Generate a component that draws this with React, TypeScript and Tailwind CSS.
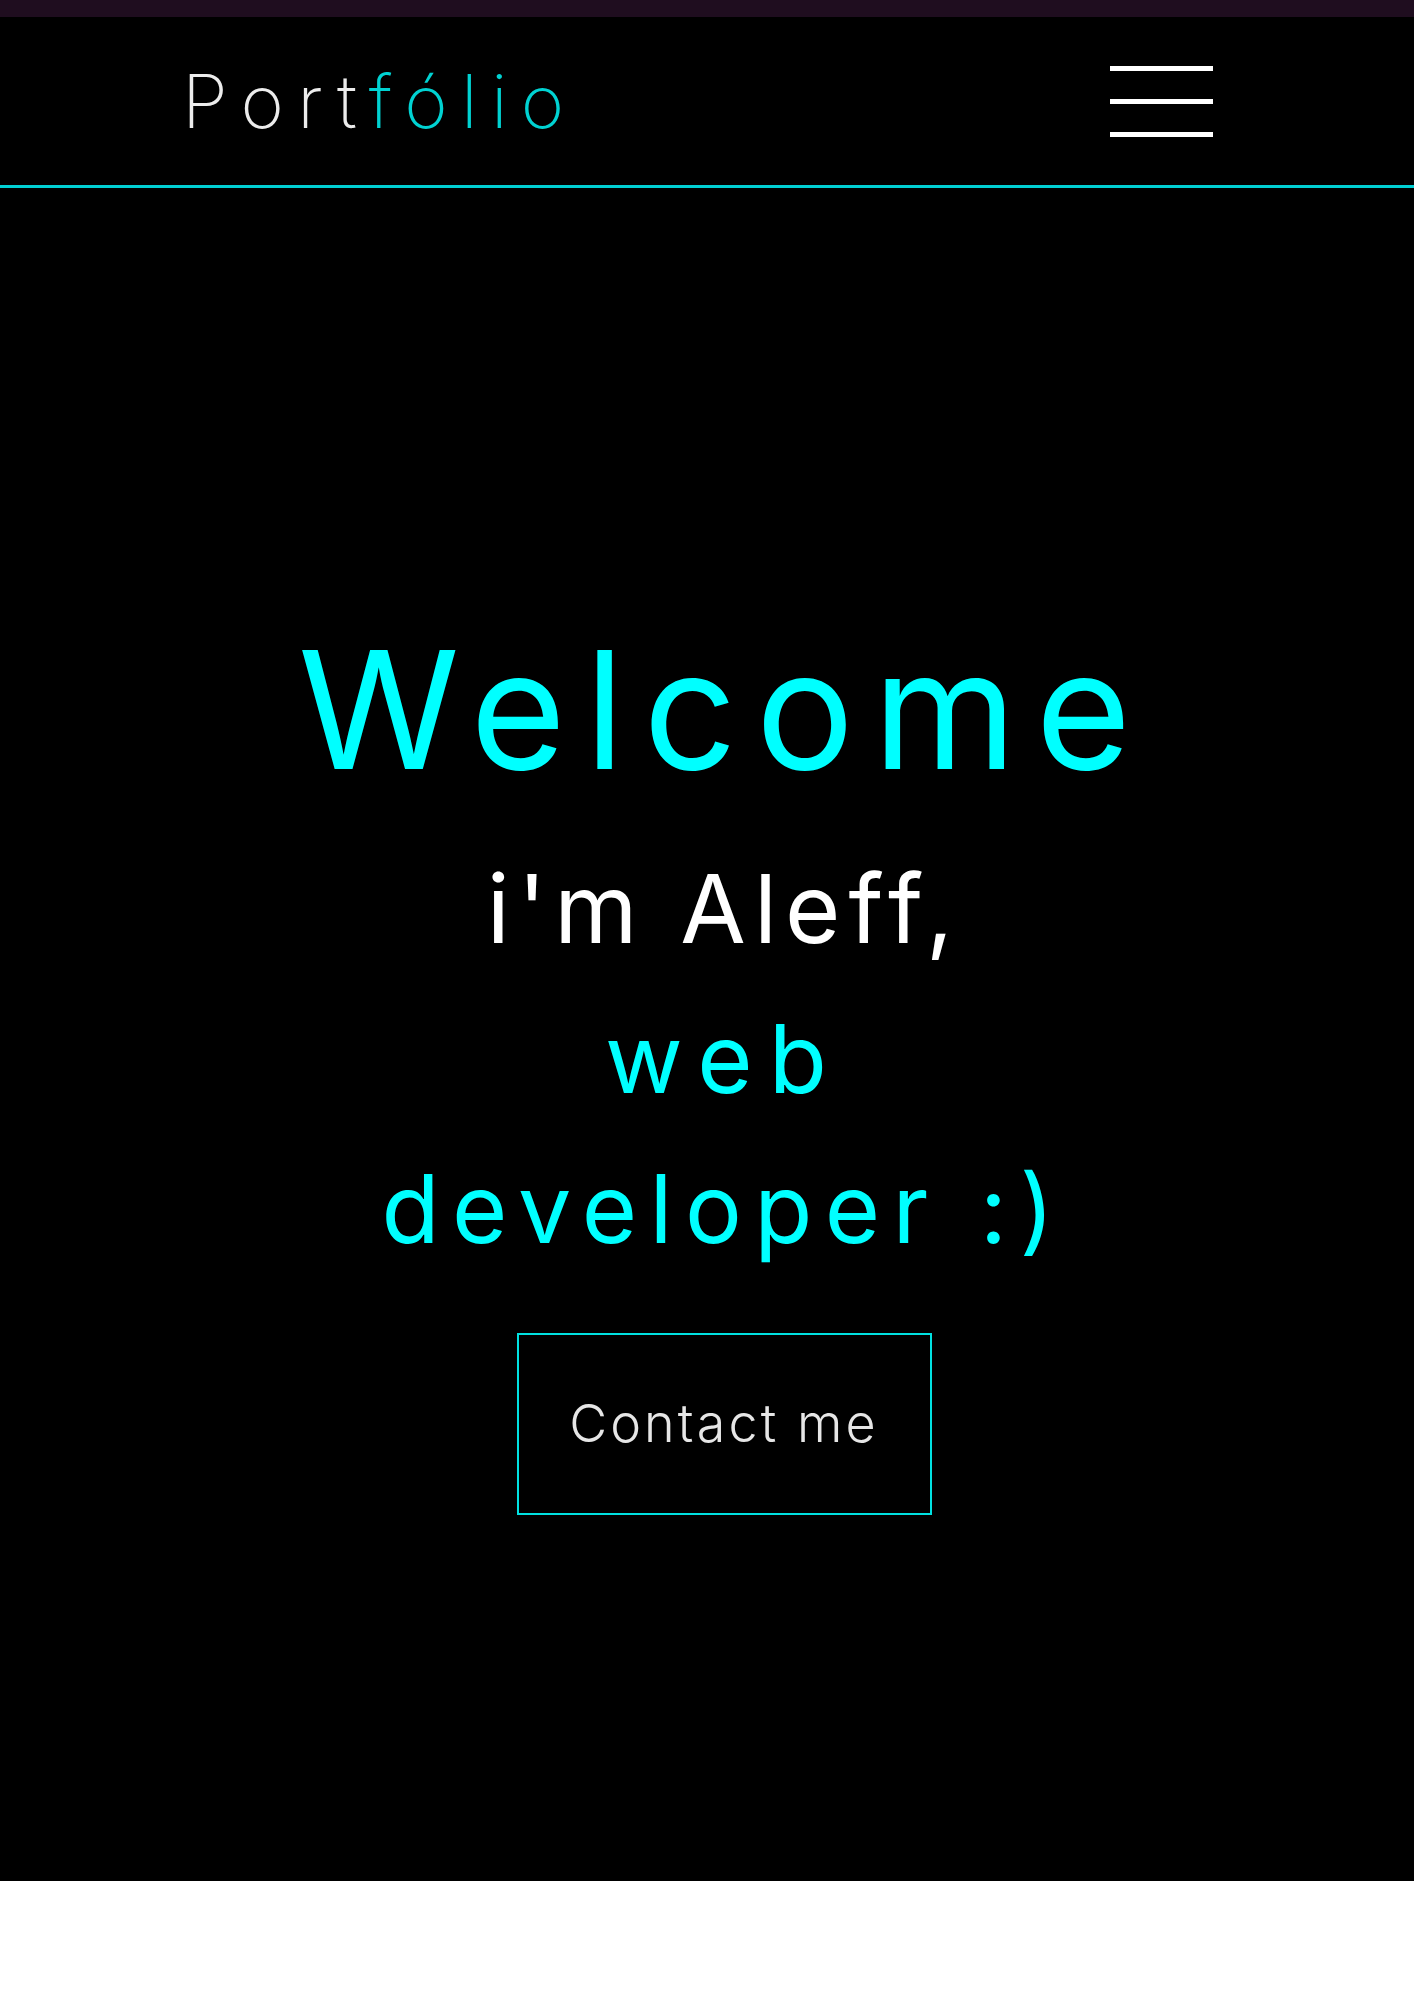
import React from 'react';

const font = { fontFamily: 'Inter, "Noto Sans", sans-serif' };

const Header: React.FC = () => {
  return (
    <header className="h-[171px] bg-black border-b-[3px] border-[#00cfd3] flex items-center justify-between pl-[182px] pr-[201px]">
      <a className="text-[74px] font-extralight tracking-[0.18em] text-[#ececec] leading-none">
        Port<span className="text-[#00d2d2]">fólio</span>
      </a>
      {/* menu toggle */}
      <button className="w-[103px] flex flex-col gap-[28px]" aria-label="menu">
        <span className="block h-[5px] w-full bg-white" />
        <span className="block h-[5px] w-full bg-white" />
        <span className="block h-[5px] w-full bg-white" />
      </button>
    </header>
  );
};

const Hero: React.FC = () => {
  return (
    <section className="h-[1693px] bg-black flex flex-col items-center pt-[440px] pl-[34px] text-center">
      <h1 className="text-[164px] leading-[164px] font-normal tracking-[0.115em] text-[#00ffff]">Welcome</h1>
      <h2 className="mt-[42px] text-[95px] leading-[150px] font-normal text-white">
        <span className="block tracking-[0.085em]">i'm Aleff,</span>
        <span className="block text-[#00ffff] tracking-[0.17em]">web</span>
        <span className="block text-[#00ffff] tracking-[0.13em]">developer :)</span>
      </h2>
      <button className="mt-[49px] w-[415px] h-[182px] border-2 border-[#00e1e1] flex items-center justify-center text-[52px] font-light tracking-[0.06em] text-[#e6e6e6]">
        Contact me
      </button>
    </section>
  );
};

export default function App() {
  return (
    <div className="min-h-screen bg-white" style={font}>
      <div className="h-[17px] bg-[#1f0d1f]" />
      <Header />
      <Hero />
    </div>
  );
}
